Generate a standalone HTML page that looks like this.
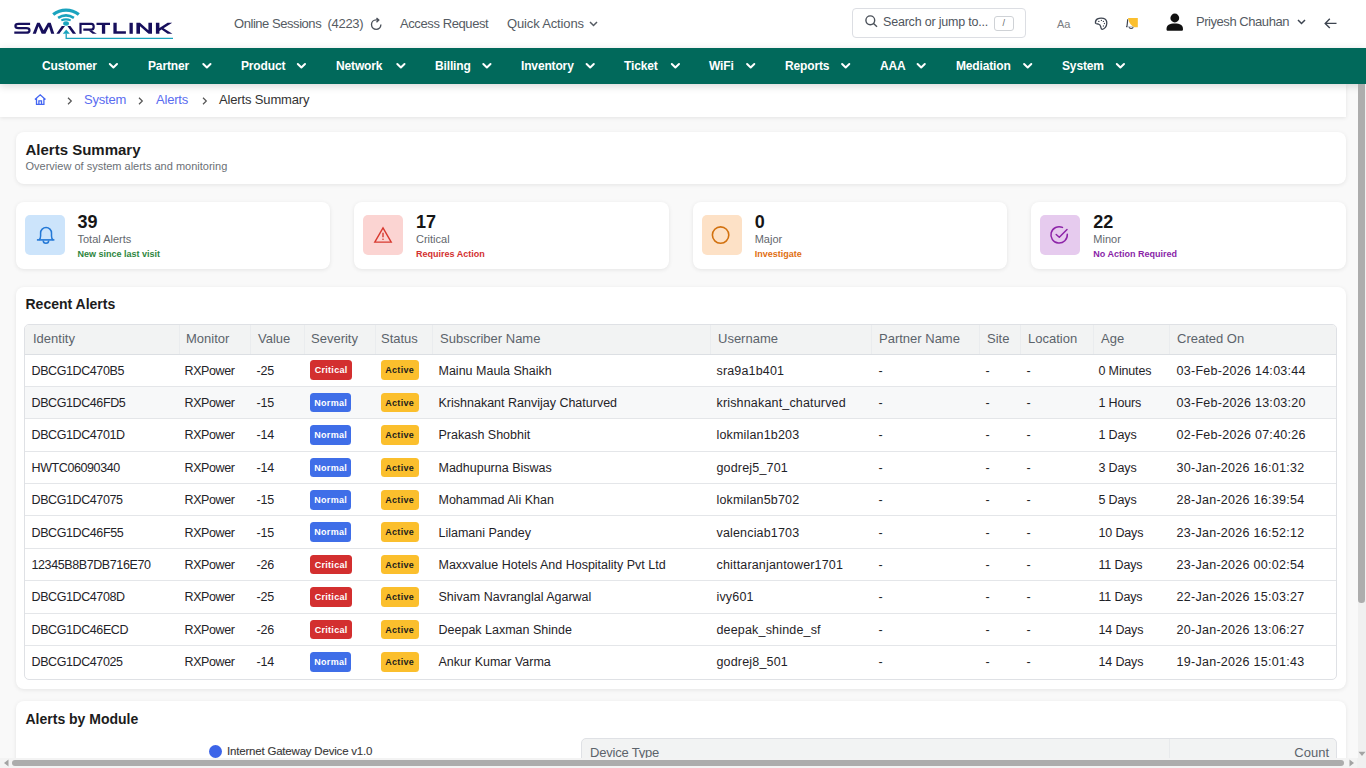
<!DOCTYPE html>
<html><head><meta charset="utf-8">
<style>
*{box-sizing:border-box;margin:0;padding:0}
html,body{width:1366px;height:768px;overflow:hidden;background:#f9f9f9;font-family:"Liberation Sans",sans-serif;color:#1f1f1f}
.t{position:absolute;white-space:nowrap;line-height:1}
svg{position:absolute;overflow:visible}
#hdr{position:absolute;left:0;top:0;width:1366px;height:48px;background:#fff}
#nav{position:absolute;left:0;top:48px;width:1366px;height:36px;background:#01695b;z-index:3;box-shadow:0 2px 8px rgba(0,0,0,.16)}
#nav .t{color:#fff;font-weight:bold;font-size:12px;top:12px;letter-spacing:-0.15px}
#bc{position:absolute;left:0;top:84px;width:1346px;height:33px;background:#fff;box-shadow:0 1px 4px rgba(0,0,0,.09)}
.card{position:absolute;background:#fff;border-radius:8px;box-shadow:0 1px 4px rgba(0,0,0,.085)}
.hd{color:#555b63;font-size:13px}
.ib{position:absolute;left:9px;top:13.5px;width:40px;height:40px;border-radius:5px}
.num{position:absolute;left:62px;top:11px;font-size:18px;font-weight:bold;color:#161616;line-height:1}
.lbl{position:absolute;left:62px;top:32px;font-size:11px;color:#63676d;line-height:1;white-space:nowrap}
.sub{position:absolute;left:62px;top:48.2px;font-size:9px;font-weight:bold;line-height:1;white-space:nowrap}
.tbl{position:absolute;border:1px solid #dfe1e5;border-radius:5px;overflow:hidden;background:#fff}
.th{position:absolute;left:0;top:0;width:100%;height:30px;background:#f2f3f3;border-bottom:1px solid #dcdfe3}
.vs{position:absolute;top:0;width:1px;height:29px;background:#eaecee}
.hc{top:7px;font-size:13px;color:#5c636b}
.tr{position:absolute;left:0;width:100%;height:32.4px;border-bottom:1px solid #e4e6e9}
.tc{top:10.1px;font-size:12.5px;color:#1f2328}
.bd{position:absolute;top:5.9px;height:19.7px;border-radius:3.5px;font-size:9px;font-weight:bold;line-height:20.6px;text-align:center;letter-spacing:0.3px;text-indent:0.3px}
#vsb{position:absolute;left:1357.5px;top:84px;width:8.5px;height:674px;background:#f0f0f0;z-index:5}
#vsb .thumb{position:absolute;left:0.8px;top:0;width:6.6px;height:519px;background:#adadad;border-radius:0 0 3.3px 3.3px}
#hsb{position:absolute;left:0;top:758px;width:1357px;height:10px;background:#f3f3f3;z-index:5}
#hsb .thumb{position:absolute;left:12px;top:2px;width:1332px;height:6px;background:#acacac;border-radius:3px}
</style></head><body>
<div id="hdr">
  <!-- logo -->
  <svg width="180" height="48" style="left:0;top:0" viewBox="0 0 180 48">
    <g fill="none" stroke="#170f5c" stroke-width="2.2">
      <path d="M30.1,23.9 H18.6 Q15.4,23.9 15.4,26.05 Q15.4,28.2 18.6,28.2 H26.3 Q29.5,28.2 29.5,30.4 Q29.5,32.65 26.3,32.65 H14.3"/>
      <path d="M80.5,22.8 V33.8 M80.5,23.9 H91.4 Q93.7,23.9 93.7,26.7 Q93.7,29.6 91.4,29.6 H83.3"/>
    </g>
    <g fill="#170f5c">
      <path d="M32.7,33.8 L37.1,22.8 L39.7,22.8 L43.63,30.34 L47.9,22.8 L50.7,22.8 L54.3,33.8 L51.2,33.8 L48.97,26.42 L45.4,33.8 L41.7,33.8 L38.52,26.24 L35.9,33.8 Z"/>
      <path d="M56.35,33.8 L61.8,26 L65,26 L59.3,33.8 Z M67.4,26 L70.4,26 L76.1,33.8 L72.8,33.8 Z"/>
      <path d="M88.6,30.4 L91.6,30.4 L96.8,33.8 L92.6,33.8 Z"/>
      <path d="M96.5,22.8 H110 V25.1 H105.2 V33.8 H101.9 V25.1 H96.5 Z"/>
      <path d="M113.4,22.8 H116.7 V31.3 H125.9 V33.8 H113.4 Z"/>
      <rect x="129.5" y="22.8" width="3.3" height="11"/>
      <path d="M136.4,22.8 H140 L148.4,30.2 V22.8 H152 V33.8 H148.6 L140,26.2 V33.8 H136.4 Z"/>
      <path d="M155.9,22.8 H159.4 V28 L167.6,22.8 H172.2 L163.6,28.2 L172.4,33.8 H167.6 L161.6,29.6 L159.4,31 V33.8 H155.9 Z"/>
    </g>
    <g fill="#1aa3be">
      <ellipse cx="66.05" cy="23.5" rx="2.9" ry="2.2"/>
      <path d="M62.8,33.8 L66.2,29.6 L69.9,33.8 Z"/>
    </g>
    <g fill="none" stroke="#1aa3be">
      <path d="M53.2,14.6 A20.35,20.35 0 0 1 78.8,14.6" stroke-width="3.2"/>
      <path d="M58.1,17.9 A14.8,14.8 0 0 1 73.9,17.9" stroke-width="2.6"/>
      <path d="M61.3,20.4 A11.5,11.5 0 0 1 70.7,20.4" stroke-width="2.1"/>
      <path d="M66.2,33.5 V38.3 H173" stroke-width="1.3"/>
    </g>
  </svg>
  <div class="t hd" style="left:234px;top:17px;letter-spacing:-0.45px">Online Sessions</div>
  <div class="t hd" style="left:327.5px;top:17px;letter-spacing:-0.3px">(4223)</div>
  <svg width="22" height="22" style="left:366px;top:12px" viewBox="0 0 22 22"><path d="M14.9,12.6 A4.7,4.7 0 1 1 10.2,7.9 H12.6 M10.5,5.9 L12.8,8.1 L10.5,10.3" fill="none" stroke="#4a5059" stroke-width="1.35"/></svg>
  <div class="t hd" style="left:400px;top:17px;letter-spacing:-0.4px">Access Request</div>
  <div class="t hd" style="left:507px;top:17px;letter-spacing:-0.15px">Quick Actions</div>
  <svg width="9" height="6" style="left:589px;top:20.5px" viewBox="0 0 9 6"><path d="M1,1 L4.5,4.5 L8,1" fill="none" stroke="#555b63" stroke-width="1.5"/></svg>
  <!-- search -->
  <div style="position:absolute;left:852px;top:8px;width:174px;height:30px;border:1px solid #dcdee3;border-radius:4px"></div>
  <svg width="13" height="12" style="left:865px;top:15px" viewBox="0 0 13 12"><circle cx="5.3" cy="5.3" r="4.4" fill="none" stroke="#4a5059" stroke-width="1.4"/><path d="M8.5,8.5 L12,11.8" stroke="#4a5059" stroke-width="1.4"/></svg>
  <div class="t" style="left:883px;top:16px;font-size:12.5px;color:#4f555d;letter-spacing:-0.2px">Search or jump to...</div>
  <div style="position:absolute;left:994px;top:16px;width:20px;height:15px;border:1px solid #cfd2d6;border-radius:3px"></div>
  <div class="t" style="left:1002.5px;top:19px;font-size:9px;color:#666">/</div>
  <div class="t" style="left:1057px;top:18.8px;font-size:11px;color:#7a7d82">Aa</div>
  <svg width="20" height="19" style="left:1091px;top:14px" viewBox="0 0 20 19"><path d="M4.5,9.2 C4.3,7.5 5.2,5.6 6.5,4.9 C8,4.1 10.6,4.0 12.4,4.3 C14.5,4.9 15.9,6.8 15.8,9.2 C15.7,11.2 15.3,12.3 14.4,13.4 C13.5,14.5 12.5,15.4 11.1,15.3 C10,15.1 10,13.8 9.7,12.6 C9.4,11.2 8.6,10.4 7.2,10.0 C6,9.7 4.8,9.8 4.5,9.2 Z" fill="none" stroke="#3d4450" stroke-width="1.3"/><ellipse cx="7.8" cy="7.3" rx=".9" ry=".6" fill="#3d4450"/><circle cx="10.4" cy="6.4" r=".65" fill="#3d4450"/><circle cx="12.4" cy="7.4" r=".65" fill="#3d4450"/><circle cx="13.4" cy="9.5" r=".65" fill="#3d4450"/><circle cx="12.4" cy="12" r=".65" fill="#3d4450"/></svg>
  <svg width="14" height="14" style="left:1125px;top:17px" viewBox="0 0 14 14"><path d="M1.2,9.8 H9.5" stroke="#b7bcc4" stroke-width="1.1"/><path d="M2.7,2.2 Q2.4,6.2 2,9 Q1.8,9.6 1.1,9.7" fill="none" stroke="#3d4450" stroke-width="1.2"/><path d="M4,10.4 Q6.1,12.6 8.3,10.4" fill="none" stroke="#3d4450" stroke-width="1.2"/><path d="M3,1 H12.8 V10.3 H10 Q4.6,8.8 3,1 Z" fill="#fbbf2e"/></svg>
  <svg width="18" height="18" style="left:1166px;top:13px" viewBox="0 0 18 18"><circle cx="8.8" cy="5" r="4.4" fill="#111"/><path d="M0.5,16.2 C0.5,12.2 3.5,10.6 8.8,10.6 C14,10.6 17,12.2 17,16.2 C17,17.4 16.4,17.8 15.5,17.8 H2 C1.1,17.8 0.5,17.4 0.5,16.2 Z" fill="#111"/></svg>
  <div class="t hd" style="left:1196px;top:15px;letter-spacing:-0.45px">Priyesh Chauhan</div>
  <svg width="9" height="6" style="left:1297px;top:19px" viewBox="0 0 9 6"><path d="M1,1 L4.5,4.5 L8,1" fill="none" stroke="#3d4450" stroke-width="1.5"/></svg>
  <svg width="13" height="11" style="left:1324px;top:18px" viewBox="0 0 13 11"><path d="M12.5,5.4 H1.2 M5.8,0.8 L1.2,5.4 L5.8,10" fill="none" stroke="#3d4450" stroke-width="1.4"/></svg>
</div>
<div id="nav">
  <div class="t" style="left:42px">Customer</div>
  <div class="t" style="left:148px">Partner</div>
  <div class="t" style="left:241px">Product</div>
  <div class="t" style="left:336px">Network</div>
  <div class="t" style="left:435px">Billing</div>
  <div class="t" style="left:521px">Inventory</div>
  <div class="t" style="left:624px">Ticket</div>
  <div class="t" style="left:709px">WiFi</div>
  <div class="t" style="left:785px">Reports</div>
  <div class="t" style="left:880px">AAA</div>
  <div class="t" style="left:956px">Mediation</div>
  <div class="t" style="left:1062px">System</div>
  <svg width="1366" height="36" style="left:0;top:0"><g fill="none" stroke="#fff" stroke-width="2" stroke-linecap="round" stroke-linejoin="round">
    <path d="M109.5,63 l3.6,3.5 l3.6,-3.5" transform="translate(0.3,-47)"/>
    <path d="M203,63 l3.6,3.5 l3.6,-3.5" transform="translate(0.3,-47)"/>
    <path d="M297.5,63 l3.6,3.5 l3.6,-3.5" transform="translate(0.3,-47)"/>
    <path d="M397,63 l3.6,3.5 l3.6,-3.5" transform="translate(0.3,-47)"/>
    <path d="M483,63 l3.6,3.5 l3.6,-3.5" transform="translate(0.3,-47)"/>
    <path d="M586.3,63 l3.6,3.5 l3.6,-3.5" transform="translate(0.3,-47)"/>
    <path d="M671.5,63 l3.6,3.5 l3.6,-3.5" transform="translate(0.3,-47)"/>
    <path d="M746.8,63 l3.6,3.5 l3.6,-3.5" transform="translate(0.3,-47)"/>
    <path d="M841.8,63 l3.6,3.5 l3.6,-3.5" transform="translate(0.3,-47)"/>
    <path d="M917.3,63 l3.6,3.5 l3.6,-3.5" transform="translate(0.3,-47)"/>
    <path d="M1023.8,63 l3.6,3.5 l3.6,-3.5" transform="translate(0.3,-47)"/>
    <path d="M1116.5,63 l3.6,3.5 l3.6,-3.5" transform="translate(0.3,-47)"/>
  </g></svg>
</div>
<div id="bc">
  <svg width="13" height="12" style="left:34px;top:10px" viewBox="0 0 13 12"><path d="M0.9,5.4 L6.2,0.8 L11.5,5.4 M2.5,4.2 V10.3 H9.9 V4.2 M4.9,10.3 V6.8 H7.5 V10.3" fill="none" stroke="#4466f2" stroke-width="1.3" stroke-linejoin="miter"/></svg>
  <svg width="6" height="8" style="left:66.5px;top:12.5px" viewBox="0 0 6 8"><path d="M1,0.8 L4.3,4 L1,7.2" fill="none" stroke="#555" stroke-width="1.2"/></svg>
  <div class="t" style="left:84px;top:9px;font-size:13px;color:#5a6cf0;letter-spacing:-0.2px">System</div>
  <svg width="6" height="8" style="left:138px;top:12.5px" viewBox="0 0 6 8"><path d="M1,0.8 L4.3,4 L1,7.2" fill="none" stroke="#555" stroke-width="1.2"/></svg>
  <div class="t" style="left:156px;top:9px;font-size:13px;color:#5a6cf0;letter-spacing:-0.2px">Alerts</div>
  <svg width="6" height="8" style="left:201.5px;top:12.5px" viewBox="0 0 6 8"><path d="M1,0.8 L4.3,4 L1,7.2" fill="none" stroke="#555" stroke-width="1.2"/></svg>
  <div class="t" style="left:219px;top:9px;font-size:13px;color:#333;letter-spacing:-0.15px">Alerts Summary</div>
</div>
<div class="card" style="left:15.5px;top:132.3px;width:1330.5px;height:51.5px">
  <div class="t" style="left:10px;top:10px;font-size:15px;font-weight:bold;color:#1c1c1c">Alerts Summary</div>
  <div class="t" style="left:10px;top:29px;font-size:11px;color:#6b6f75">Overview of system alerts and monitoring</div>
</div>
<div class="card" style="left:15.5px;top:201.8px;width:314.8px;height:67px">
  <div class="ib" style="background:#cce4fb"></div>
  <svg width="30" height="30" style="left:15px;top:20px" viewBox="0 0 30 30"><path d="M5.9,17.9 H23.4" stroke="#2378d6" stroke-width="1.6"/><path d="M8,17.9 Q9.6,16.8 9.6,14 V11 A5.45,5.45 0 0 1 20.5,11 V14 Q20.5,16.8 22.1,17.9" fill="none" stroke="#2378d6" stroke-width="1.5"/><path d="M12.2,18.4 A2.75,2.75 0 0 0 17.7,18.4" fill="none" stroke="#2378d6" stroke-width="1.5"/></svg>
  <div class="num">39</div><div class="lbl">Total Alerts</div><div class="sub" style="color:#2e8540">New since last visit</div>
</div>
<div class="card" style="left:354px;top:201.8px;width:314.6px;height:67px">
  <div class="ib" style="background:#fbd4d2"></div>
  <svg width="20" height="18" style="left:19px;top:24px" viewBox="0 0 20 18"><path d="M10,1.9 L18.2,16.1 H1.8 Z" fill="none" stroke="#d83a30" stroke-width="1.4" stroke-linejoin="miter"/><path d="M10,6.8 V11.3" stroke="#d83a30" stroke-width="1.4"/><circle cx="10" cy="13.3" r=".8" fill="#d83a30"/></svg>
  <div class="num">17</div><div class="lbl">Critical</div><div class="sub" style="color:#d3302f">Requires Action</div>
</div>
<div class="card" style="left:692.7px;top:201.8px;width:314.6px;height:67px">
  <div class="ib" style="background:#fde1c6"></div>
  <svg width="20" height="20" style="left:18.5px;top:23px" viewBox="0 0 20 20"><circle cx="9.6" cy="10.1" r="8.2" fill="none" stroke="#d2710f" stroke-width="1.6"/></svg>
  <div class="num">0</div><div class="lbl">Major</div><div class="sub" style="color:#df6f10">Investigate</div>
</div>
<div class="card" style="left:1031.3px;top:201.8px;width:314.6px;height:67px">
  <div class="ib" style="background:#e6cbee"></div>
  <svg width="20" height="20" style="left:19px;top:23px" viewBox="0 0 20 20"><path d="M17.3,9.3 A8.2,8.2 0 1 1 12.5,2.4" fill="none" stroke="#8d24a8" stroke-width="1.5" stroke-linecap="round"/><path d="M6.2,9.5 L9.3,12.3 L17,4.5" fill="none" stroke="#8d24a8" stroke-width="1.5" stroke-linecap="round" stroke-linejoin="round"/></svg>
  <div class="num">22</div><div class="lbl">Minor</div><div class="sub" style="color:#8a1fa8">No Action Required</div>
</div>
<!--TBL-START-->
<div class="card" style="left:15.5px;top:287.2px;width:1330.5px;height:401.5px">
  <div class="t" style="left:10px;top:10px;font-size:14px;font-weight:bold;color:#1c1c1c">Recent Alerts</div>
<div class="tbl" style="left:8.5px;top:36.80000000000001px;width:1313px;height:356px">
<div class="th"></div>
<div class="vs" style="left:154px"></div>
<div class="vs" style="left:225px"></div>
<div class="vs" style="left:279px"></div>
<div class="vs" style="left:350px"></div>
<div class="vs" style="left:407px"></div>
<div class="vs" style="left:685px"></div>
<div class="vs" style="left:846px"></div>
<div class="vs" style="left:954px"></div>
<div class="vs" style="left:995px"></div>
<div class="vs" style="left:1068px"></div>
<div class="vs" style="left:1144px"></div>
<div class="t hc" style="left:8px">Identity</div>
<div class="t hc" style="left:161px">Monitor</div>
<div class="t hc" style="left:233px">Value</div>
<div class="t hc" style="left:286px">Severity</div>
<div class="t hc" style="left:356px">Status</div>
<div class="t hc" style="left:415px">Subscriber Name</div>
<div class="t hc" style="left:693px">Username</div>
<div class="t hc" style="left:854px">Partner Name</div>
<div class="t hc" style="left:962px">Site</div>
<div class="t hc" style="left:1003px">Location</div>
<div class="t hc" style="left:1076px">Age</div>
<div class="t hc" style="left:1152px">Created On</div>
<div class="tr" style="top:29.5px">
<div class="t tc" style="left:6.5px;letter-spacing:-0.4px">DBCG1DC470B5</div>
<div class="t tc" style="left:159.5px;letter-spacing:-0.4px">RXPower</div>
<div class="t tc" style="left:231.5px;letter-spacing:-0.2px">-25</div>
<div class="t tc" style="left:413.5px;letter-spacing:0px">Mainu Maula Shaikh</div>
<div class="t tc" style="left:691.5px;letter-spacing:0.17px">sra9a1b401</div>
<div class="t tc" style="left:853.5px;letter-spacing:0px">-</div>
<div class="t tc" style="left:960.5px;letter-spacing:0px">-</div>
<div class="t tc" style="left:1001.5px;letter-spacing:0px">-</div>
<div class="t tc" style="left:1073.5px;letter-spacing:-0.15px">0 Minutes</div>
<div class="t tc" style="left:1151.5px;letter-spacing:0.28px">03-Feb-2026 14:03:44</div>
<div class="bd" style="left:284.8px;width:42.4px;background:#d32f2f;color:#fff">Critical</div>
<div class="bd" style="left:355.5px;width:38px;background:#fbbf2d;color:#1d1d1d">Active</div>
</div>
<div class="tr" style="background:#f7f8f9;top:61.9px">
<div class="t tc" style="left:6.5px;letter-spacing:-0.4px">DBCG1DC46FD5</div>
<div class="t tc" style="left:159.5px;letter-spacing:-0.4px">RXPower</div>
<div class="t tc" style="left:231.5px;letter-spacing:-0.2px">-15</div>
<div class="t tc" style="left:413.5px;letter-spacing:0px">Krishnakant Ranvijay Chaturved</div>
<div class="t tc" style="left:691.5px;letter-spacing:0.17px">krishnakant_chaturved</div>
<div class="t tc" style="left:853.5px;letter-spacing:0px">-</div>
<div class="t tc" style="left:960.5px;letter-spacing:0px">-</div>
<div class="t tc" style="left:1001.5px;letter-spacing:0px">-</div>
<div class="t tc" style="left:1073.5px;letter-spacing:-0.15px">1 Hours</div>
<div class="t tc" style="left:1151.5px;letter-spacing:0.28px">03-Feb-2026 13:03:20</div>
<div class="bd" style="left:284.8px;width:41.4px;background:#3f6ee8;color:#fff">Normal</div>
<div class="bd" style="left:355.5px;width:38px;background:#fbbf2d;color:#1d1d1d">Active</div>
</div>
<div class="tr" style="top:94.3px">
<div class="t tc" style="left:6.5px;letter-spacing:-0.4px">DBCG1DC4701D</div>
<div class="t tc" style="left:159.5px;letter-spacing:-0.4px">RXPower</div>
<div class="t tc" style="left:231.5px;letter-spacing:-0.2px">-14</div>
<div class="t tc" style="left:413.5px;letter-spacing:0px">Prakash Shobhit</div>
<div class="t tc" style="left:691.5px;letter-spacing:0.17px">lokmilan1b203</div>
<div class="t tc" style="left:853.5px;letter-spacing:0px">-</div>
<div class="t tc" style="left:960.5px;letter-spacing:0px">-</div>
<div class="t tc" style="left:1001.5px;letter-spacing:0px">-</div>
<div class="t tc" style="left:1073.5px;letter-spacing:-0.15px">1 Days</div>
<div class="t tc" style="left:1151.5px;letter-spacing:0.28px">02-Feb-2026 07:40:26</div>
<div class="bd" style="left:284.8px;width:41.4px;background:#3f6ee8;color:#fff">Normal</div>
<div class="bd" style="left:355.5px;width:38px;background:#fbbf2d;color:#1d1d1d">Active</div>
</div>
<div class="tr" style="top:126.7px">
<div class="t tc" style="left:6.5px;letter-spacing:-0.4px">HWTC06090340</div>
<div class="t tc" style="left:159.5px;letter-spacing:-0.4px">RXPower</div>
<div class="t tc" style="left:231.5px;letter-spacing:-0.2px">-14</div>
<div class="t tc" style="left:413.5px;letter-spacing:0px">Madhupurna Biswas</div>
<div class="t tc" style="left:691.5px;letter-spacing:0.17px">godrej5_701</div>
<div class="t tc" style="left:853.5px;letter-spacing:0px">-</div>
<div class="t tc" style="left:960.5px;letter-spacing:0px">-</div>
<div class="t tc" style="left:1001.5px;letter-spacing:0px">-</div>
<div class="t tc" style="left:1073.5px;letter-spacing:-0.15px">3 Days</div>
<div class="t tc" style="left:1151.5px;letter-spacing:0.28px">30-Jan-2026 16:01:32</div>
<div class="bd" style="left:284.8px;width:41.4px;background:#3f6ee8;color:#fff">Normal</div>
<div class="bd" style="left:355.5px;width:38px;background:#fbbf2d;color:#1d1d1d">Active</div>
</div>
<div class="tr" style="top:159.1px">
<div class="t tc" style="left:6.5px;letter-spacing:-0.4px">DBCG1DC47075</div>
<div class="t tc" style="left:159.5px;letter-spacing:-0.4px">RXPower</div>
<div class="t tc" style="left:231.5px;letter-spacing:-0.2px">-15</div>
<div class="t tc" style="left:413.5px;letter-spacing:0px">Mohammad Ali Khan</div>
<div class="t tc" style="left:691.5px;letter-spacing:0.17px">lokmilan5b702</div>
<div class="t tc" style="left:853.5px;letter-spacing:0px">-</div>
<div class="t tc" style="left:960.5px;letter-spacing:0px">-</div>
<div class="t tc" style="left:1001.5px;letter-spacing:0px">-</div>
<div class="t tc" style="left:1073.5px;letter-spacing:-0.15px">5 Days</div>
<div class="t tc" style="left:1151.5px;letter-spacing:0.28px">28-Jan-2026 16:39:54</div>
<div class="bd" style="left:284.8px;width:41.4px;background:#3f6ee8;color:#fff">Normal</div>
<div class="bd" style="left:355.5px;width:38px;background:#fbbf2d;color:#1d1d1d">Active</div>
</div>
<div class="tr" style="top:191.5px">
<div class="t tc" style="left:6.5px;letter-spacing:-0.4px">DBCG1DC46F55</div>
<div class="t tc" style="left:159.5px;letter-spacing:-0.4px">RXPower</div>
<div class="t tc" style="left:231.5px;letter-spacing:-0.2px">-15</div>
<div class="t tc" style="left:413.5px;letter-spacing:0px">Lilamani Pandey</div>
<div class="t tc" style="left:691.5px;letter-spacing:0.17px">valenciab1703</div>
<div class="t tc" style="left:853.5px;letter-spacing:0px">-</div>
<div class="t tc" style="left:960.5px;letter-spacing:0px">-</div>
<div class="t tc" style="left:1001.5px;letter-spacing:0px">-</div>
<div class="t tc" style="left:1073.5px;letter-spacing:-0.15px">10 Days</div>
<div class="t tc" style="left:1151.5px;letter-spacing:0.28px">23-Jan-2026 16:52:12</div>
<div class="bd" style="left:284.8px;width:41.4px;background:#3f6ee8;color:#fff">Normal</div>
<div class="bd" style="left:355.5px;width:38px;background:#fbbf2d;color:#1d1d1d">Active</div>
</div>
<div class="tr" style="top:223.9px">
<div class="t tc" style="left:6.5px;letter-spacing:-0.4px">12345B8B7DB716E70</div>
<div class="t tc" style="left:159.5px;letter-spacing:-0.4px">RXPower</div>
<div class="t tc" style="left:231.5px;letter-spacing:-0.2px">-26</div>
<div class="t tc" style="left:413.5px;letter-spacing:0px">Maxxvalue Hotels And Hospitality Pvt Ltd</div>
<div class="t tc" style="left:691.5px;letter-spacing:0.17px">chittaranjantower1701</div>
<div class="t tc" style="left:853.5px;letter-spacing:0px">-</div>
<div class="t tc" style="left:960.5px;letter-spacing:0px">-</div>
<div class="t tc" style="left:1001.5px;letter-spacing:0px">-</div>
<div class="t tc" style="left:1073.5px;letter-spacing:-0.15px">11 Days</div>
<div class="t tc" style="left:1151.5px;letter-spacing:0.28px">23-Jan-2026 00:02:54</div>
<div class="bd" style="left:284.8px;width:42.4px;background:#d32f2f;color:#fff">Critical</div>
<div class="bd" style="left:355.5px;width:38px;background:#fbbf2d;color:#1d1d1d">Active</div>
</div>
<div class="tr" style="top:256.3px">
<div class="t tc" style="left:6.5px;letter-spacing:-0.4px">DBCG1DC4708D</div>
<div class="t tc" style="left:159.5px;letter-spacing:-0.4px">RXPower</div>
<div class="t tc" style="left:231.5px;letter-spacing:-0.2px">-25</div>
<div class="t tc" style="left:413.5px;letter-spacing:0px">Shivam Navranglal Agarwal</div>
<div class="t tc" style="left:691.5px;letter-spacing:0.17px">ivy601</div>
<div class="t tc" style="left:853.5px;letter-spacing:0px">-</div>
<div class="t tc" style="left:960.5px;letter-spacing:0px">-</div>
<div class="t tc" style="left:1001.5px;letter-spacing:0px">-</div>
<div class="t tc" style="left:1073.5px;letter-spacing:-0.15px">11 Days</div>
<div class="t tc" style="left:1151.5px;letter-spacing:0.28px">22-Jan-2026 15:03:27</div>
<div class="bd" style="left:284.8px;width:42.4px;background:#d32f2f;color:#fff">Critical</div>
<div class="bd" style="left:355.5px;width:38px;background:#fbbf2d;color:#1d1d1d">Active</div>
</div>
<div class="tr" style="top:288.7px">
<div class="t tc" style="left:6.5px;letter-spacing:-0.4px">DBCG1DC46ECD</div>
<div class="t tc" style="left:159.5px;letter-spacing:-0.4px">RXPower</div>
<div class="t tc" style="left:231.5px;letter-spacing:-0.2px">-26</div>
<div class="t tc" style="left:413.5px;letter-spacing:0px">Deepak Laxman Shinde</div>
<div class="t tc" style="left:691.5px;letter-spacing:0.17px">deepak_shinde_sf</div>
<div class="t tc" style="left:853.5px;letter-spacing:0px">-</div>
<div class="t tc" style="left:960.5px;letter-spacing:0px">-</div>
<div class="t tc" style="left:1001.5px;letter-spacing:0px">-</div>
<div class="t tc" style="left:1073.5px;letter-spacing:-0.15px">14 Days</div>
<div class="t tc" style="left:1151.5px;letter-spacing:0.28px">20-Jan-2026 13:06:27</div>
<div class="bd" style="left:284.8px;width:42.4px;background:#d32f2f;color:#fff">Critical</div>
<div class="bd" style="left:355.5px;width:38px;background:#fbbf2d;color:#1d1d1d">Active</div>
</div>
<div class="tr" style="top:321.1px;border-bottom:none">
<div class="t tc" style="left:6.5px;letter-spacing:-0.4px">DBCG1DC47025</div>
<div class="t tc" style="left:159.5px;letter-spacing:-0.4px">RXPower</div>
<div class="t tc" style="left:231.5px;letter-spacing:-0.2px">-14</div>
<div class="t tc" style="left:413.5px;letter-spacing:0px">Ankur Kumar Varma</div>
<div class="t tc" style="left:691.5px;letter-spacing:0.17px">godrej8_501</div>
<div class="t tc" style="left:853.5px;letter-spacing:0px">-</div>
<div class="t tc" style="left:960.5px;letter-spacing:0px">-</div>
<div class="t tc" style="left:1001.5px;letter-spacing:0px">-</div>
<div class="t tc" style="left:1073.5px;letter-spacing:-0.15px">14 Days</div>
<div class="t tc" style="left:1151.5px;letter-spacing:0.28px">19-Jan-2026 15:01:43</div>
<div class="bd" style="left:284.8px;width:41.4px;background:#3f6ee8;color:#fff">Normal</div>
<div class="bd" style="left:355.5px;width:38px;background:#fbbf2d;color:#1d1d1d">Active</div>
</div>
</div>
</div>
<!--TBL-END-->
<div class="card" style="left:15.5px;top:701.2px;width:1330.5px;height:80px">
  <div class="t" style="left:10px;top:10.5px;font-size:14px;font-weight:bold;color:#1c1c1c">Alerts by Module</div>
  <div style="position:absolute;left:193.5px;top:43.5px;width:13.4px;height:13.4px;border-radius:50%;background:#3c64e8"></div>
  <div class="t" style="left:211.5px;top:44.5px;font-size:11.5px;color:#383838;letter-spacing:-0.2px;-webkit-text-stroke:0.1px #383838">Internet Gateway Device v1.0</div>
  <div style="position:absolute;left:565.3px;top:37px;width:756px;height:60px;border:1px solid #dfe1e5;border-radius:5px;background:#f2f3f3"></div>
  <div style="position:absolute;left:1153.3px;top:38px;width:1px;height:40px;background:#e8eaec"></div>
  <div class="t" style="left:574.5px;top:45.3px;font-size:13px;color:#5c636b;letter-spacing:-0.2px">Device Type</div>
  <div class="t" style="left:1278.8px;top:45.3px;font-size:13px;color:#5c636b">Count</div>
</div>
<div id="vsb"><div class="thumb"></div><svg width="8" height="6" style="left:0.5px;top:667px" viewBox="0 0 8 6"><path d="M0.5,0.8 H7.5 L4,5 Z" fill="#a3a3a3"/></svg></div>
<div id="hsb"><div class="thumb"></div>
<svg width="6" height="8" style="left:2.5px;top:1px" viewBox="0 0 6 8"><path d="M5.5,0.5 V7.5 L1,4 Z" fill="#a3a3a3"/></svg>
<svg width="6" height="8" style="left:1348.5px;top:1px" viewBox="0 0 6 8"><path d="M0.5,0.5 V7.5 L5,4 Z" fill="#a3a3a3"/></svg>
</div>
<div style="position:absolute;left:1357px;top:758px;width:9px;height:10px;background:#f0f0f0;z-index:6"></div>
</body></html>
